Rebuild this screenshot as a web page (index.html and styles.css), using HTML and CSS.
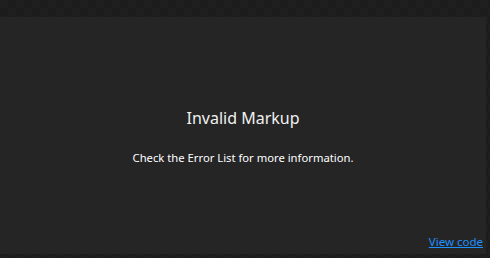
FILE: index.html
```html
<!DOCTYPE html>
<html lang="en">
  <head>
    <meta charset="UTF-8" />
    <meta name="viewport" content="width=device-width, initial-scale=1.0" />
    <title>Designer</title>
    <link rel="stylesheet" href="styles.css">
  </head>
  <body>
    <div class="frame">
      <div class="ruler"></div>
      <div class="panel">
        <div class="message">
          <h1>Invalid Markup</h1>
          <p>Check the Error List for more information.</p>
        </div>
        <div class="footer">
          <a href="#" class="view-code">View code</a>
        </div>
      </div>
    </div>
  </body>
</html>
```

FILE: styles.css
```css
html,
body {
  margin: 0;
  height: 100%;
}

body {
  font-family: "Noto Sans", "Open Sans", sans-serif;
  background-color: #1e1e1e;
  background-image: conic-gradient(#1c1c1c 25%, #1f1f1f 0 50%, #1c1c1c 0 75%, #1f1f1f 0);
  background-size: 16px 16px;
  color: #f1f1f1;
}

.frame {
  display: flex;
  flex-direction: column;
  height: 100%;
}

.ruler {
  height: 17px;
  flex-shrink: 0;
}

.panel {
  display: flex;
  flex-direction: column;
  width: 486px;
  height: 237px;
  background-color: #252526;
}

.message {
  flex: 1;
  display: flex;
  flex-direction: column;
  align-items: center;
  justify-content: center;
  padding-top: 20px;
}

.message h1 {
  margin: 0;
  font-size: 16px;
  font-weight: normal;
}

.message p {
  margin: 21px 0 0;
  font-size: 11.25px;
  color: #ffffff;
}

.footer {
  display: flex;
  justify-content: flex-end;
  padding: 0 3px 5px 0;
}

.view-code {
  color: #1e90ff;
  font-size: 11.5px;
}
```
